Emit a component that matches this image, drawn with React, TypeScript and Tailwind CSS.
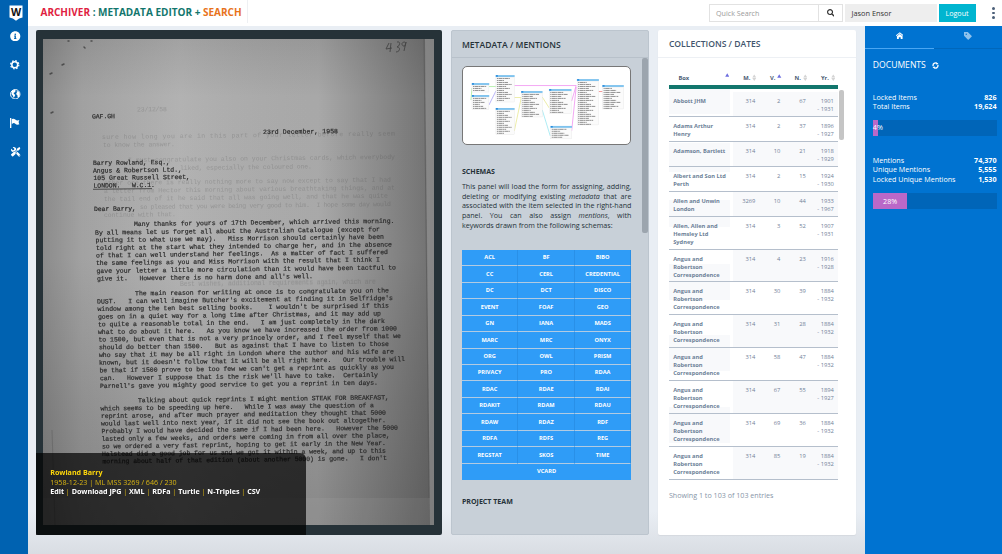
import React from "react";
import { FaInfoCircle, FaTools, FaSearch } from "react-icons/fa";
import { ImHome, ImPriceTag } from "react-icons/im";

type Line = [number, number, number, string];

const letter: Line[] = [
  [92, 118.5, 115, "GAF.GH"],
  [263, 134, 338, "23rd December, 1958"],
  [93, 165, 170, "Barry Rowland, Esq.,"],
  [93, 172.7, 182, "Angus & Robertson Ltd.,"],
  [93.5, 180, 190, "105 Great Russell Street,"],
  [93.5, 187.7, 155, "LONDON.   W.C.1."],
  [94, 211, 136, "Dear Barry,"],
  [134, 226, 394.5, "Many thanks for yours of 17th December, which arrived this morning."],
  [95, 234.7, 380, "By all means let us forget all about the Australian Catalogue (except for"],
  [95.5, 242.2, 384, "putting it to what use we may).   Miss Morrison should certainly have been"],
  [96, 250, 392, "told right at the start what they intended to charge her, and in the absence"],
  [96, 257.5, 388, "of that I can well understand her feelings.  As a matter of fact I suffered"],
  [96, 265, 380, "the same feelings as you and Miss Morrison with the result that I think I"],
  [96.5, 273, 396, "gave your letter a little more circulation than it would have been tactful to"],
  [97, 280.7, 313, "give it.   However there is no harm done and all's well."],
  [135, 295.4, 389, "The main reason for writing at once is to congratulate you on the"],
  [97, 303.5, 393, "DUST.   I can well imagine Butcher's excitement at finding it in Selfridge's"],
  [97.5, 311, 389, "window among the ten best selling books.    I wouldn't be surprised if this"],
  [98, 318.7, 381, "goes on in a quiet way for a long time after Christmas, and it may add up"],
  [98, 326.4, 385, "to quite a reasonable total in the end.   I am just completely in the dark"],
  [98, 334, 397, "what to do about it here.   As you know we have increased the order from 1000"],
  [98.5, 341.6, 401, "to 1500, but even that is not a very princely order, and I feel myself that we"],
  [99, 349.3, 389, "should do better than 1500.   But as against that I have to listen to those"],
  [99, 357, 394, "who say that it may be all right in London where the author and his wife are"],
  [99, 364.7, 405, "known, but it doesn't follow that it will be all right here.   Our trouble will"],
  [99.5, 372.4, 394, "be that if 1500 prove to be too few we can't get a reprint as quickly as you"],
  [100, 380.2, 378, "can.   However I suppose that is the risk we'll have to take.  Certainly"],
  [100, 388, 378, "Parnell's gave you mighty good service to get you a reprint in ten days."],
  [138, 402.4, 389, "Talking about quick reprints I might mention STEAK FOR BREAKFAST,"],
  [100.5, 410.5, 374, "which seems to be speeding up here.   While I was away the question of a"],
  [101, 418, 386, "reprint arose, and after much prayer and meditation they thought that 5000"],
  [101, 425.5, 386, "would last well into next year, if it did not see the book out altogether."],
  [101.5, 433.2, 398, "Probably I would have decided the same if I had been here.   However the 5000"],
  [101.5, 440.8, 390, "lasted only a few weeks, and orders were coming in from all over the place,"],
  [102, 448.4, 386, "so we ordered a very fast reprint, hoping to get it early in the New Year."],
  [102, 456, 386, "Halstead did a good job for us and we got it within a week, and up to this"],
  [102.5, 463.4, 387, "morning about half of that edition (about another 5000) is gone.   I don't"],
];

const ghosts: Line[] = [
  [137, 111.5, 167, "23/12/58"],
  [102, 139, 395, "sure how long you are in this part of your letter before really seem"],
  [103, 147, 175, "to know the answer."],
  [128, 162, 395, "I must congratulate you also on your Christmas cards, which everybody"],
  [180, 170, 312, "liked, especially the coloured one."],
  [104, 185, 391, "other one there is really nothing more to say now except to say that I had"],
  [104, 193, 395, "a letter from Hector this morning about various breathtaking things, and at"],
  [104, 201, 388, "the tail end of it he said that all was going well, and that he was quite"],
  [140, 209, 391, "so pleased that you were being very good to him.  I hope some day would"],
  [104, 217, 176, "continue with that."],
  [180, 286, 376, "Best wishes, additional requirements again, which are"],
];

function LetterLine({ line }: { line: Line }) {
  const [x, y, end, text] = line;
  return (
    <text x={x} y={y} textLength={end - x} transform={`rotate(-0.68 ${x} ${y})`} className="whitespace-pre">
      {text}
    </text>
  );
}

function Letter() {
  return (
    <svg viewBox="43 39 391 486" className="block h-[486px] w-[391px]" fontFamily='"Liberation Mono", monospace' fontSize="6.5">
      <defs>
        <linearGradient id="paper" x1="0" y1="0" x2="0" y2="1">
          <stop offset="0" stopColor="#9c9c9c" />
          <stop offset="0.12" stopColor="#adadad" />
          <stop offset="0.45" stopColor="#aeaeae" />
          <stop offset="0.75" stopColor="#9a9a9a" />
          <stop offset="1" stopColor="#8c8c8c" />
        </linearGradient>
        <linearGradient id="sides" x1="0" y1="0" x2="1" y2="0">
          <stop offset="0" stopColor="#000" stopOpacity="0.2" />
          <stop offset="0.1" stopColor="#000" stopOpacity="0.07" />
          <stop offset="0.35" stopColor="#fff" stopOpacity="0.06" />
          <stop offset="0.7" stopColor="#000" stopOpacity="0.03" />
          <stop offset="1" stopColor="#000" stopOpacity="0.36" />
        </linearGradient>
        <filter id="soft"><feGaussianBlur stdDeviation="0.7" /></filter>
        <filter id="ink"><feGaussianBlur stdDeviation="0.35" /></filter>
      </defs>
      <rect x="43" y="38" width="393" height="488" fill="url(#paper)" />
      <rect x="43" y="38" width="393" height="488" fill="url(#sides)" />
      <path d="M43 498H430V525H43Z" fill="#fff" opacity=".05" />
      <path d="M424 39L429 498" stroke="#555" strokeWidth="1" opacity=".6" />
      <path d="M425 39L430 525H435V39Z" fill="#999" opacity=".55" />
      <path d="M52 430L55 525" stroke="#555" strokeWidth="1" opacity=".4" />
      <g fill="#333" opacity=".2" filter="url(#soft)">
        {ghosts.map((l, i) => <LetterLine key={i} line={l} />)}
      </g>
      <g fill="#2b2b2b" stroke="#2b2b2b" strokeWidth=".2" filter="url(#ink)">
        {letter.map((l, i) => <LetterLine key={i} line={l} />)}
      </g>
      <path d="M93 189.3L152 188.6" stroke="#333" strokeWidth=".8" />
      <path d="M389 43l-3 6 6-1M391 43l-1 9M397 42c4-1 3 4 0 5 4 0 3 5-1 5M405 42c-5 0-3 5 0 4l1-4-2 9" fill="none" stroke="#444" strokeWidth=".9" />
      <path d="M68 41l1 0M84 47l1 1M91 41l1 0M62 65l2-1M50 74l2-1M51 113l2-1" stroke="#333" strokeWidth="1.5" strokeLinecap="round" opacity=".7" />
    </svg>
  );
}

const tables: [number, number, number, number][] = [
  [9, 18, 17, 7], [9, 30, 17, 12.5], [33, 10, 18.5, 25], [33, 43, 18.5, 24.5], [58.5, 26, 21, 24],
  [86.5, 24, 22, 22.5], [88, 61, 21, 11], [114.500, 14, 21.500, 44], [140, 20, 21, 22],
];

function SchemaDiagram() {
  return (
    <svg viewBox="0 0 168 77" className="block h-full w-full">
      <g fill="none" strokeWidth=".7">
        <path d="M9 21L8 33M26 19.500h7" stroke="#9beb8f" />
        <path d="M26 38L33 24" stroke="#9c94f5" />
        <path d="M51.500 18.500H113.500L109 34M109 64L113.500 20" stroke="#ee82ee" />
        <path d="M51.500 30.500h7L51.500 64M79.500 30l7 11" stroke="#e5e585" />
        <path d="M79.500 43l8 26" stroke="#8ce4ef" />
        <path d="M136 24.500h4" stroke="#f06b6b" />
      </g>
      {tables.map(([x, y, w, h]) => (
        <g key={`${x}-${y}`}>
          <rect x={x} y={y} width={w} height={h} fill="#fbfbfb" stroke="#ddd" strokeWidth=".3" />
          <rect x={x - 0.3} y={y - 2} width={w + 0.6} height="1.900" fill="#7fc3ee" />
          <rect x={x} y={y - 1.9} width="2" height="1.500" fill="#2689dc" />
          {Array.from({ length: Math.floor(h / 2) }, (_, i) => (
            <path key={i} d={`M${x + 1} ${y + 1.4 + i * 2}h${w * (0.4 + ((i * 7 + Math.round(x)) % 5) * 0.1)}`} stroke="#777" strokeWidth=".8" strokeDasharray="1.2 .4 4 .3" />
          ))}
        </g>
      ))}
    </svg>
  );
}

const schemas = "ACL BF BIBO CC CERL CREDENTIAL DC DCT DISCO EVENT FOAF GEO GN IANA MADS MARC MRC ONYX ORG OWL PRISM PRIVACY PRO RDAA RDAC RDAE RDAI RDAKIT RDAM RDAU RDAW RDAZ RDF RDFA RDFS REG REGSTAT SKOS TIME".split(" ");

const arc = ["Angus and", "Robertson", "Correspondence"];
const rows: [string[], string, string, string, string, string][] = [
  [["Abbott JHM"], "314", "2", "67", "1901", "1931"],
  [["Adams Arthur", "Henry"], "314", "2", "37", "1896", "1927"],
  [["Adamson, Bartlett"], "314", "10", "21", "1918", "1929"],
  [["Albert and Son Ltd", "Perth"], "314", "2", "15", "1924", "1930"],
  [["Allen and Unwin", "London"], "3269", "10", "44", "1933", "1967"],
  [["Allen, Allen and", "Hemsley Ltd", "Sydney"], "314", "3", "52", "1907", "1931"],
  [arc, "314", "4", "23", "1916", "1928"],
  [arc, "314", "30", "39", "1884", "1932"],
  [arc, "314", "31", "28", "1884", "1932"],
  [arc, "314", "58", "47", "1884", "1932"],
  [arc, "314", "67", "55", "1894", "1927"],
  [arc, "314", "69", "36", "1884", "1932"],
  [arc, "314", "85", "19", "1884", "1932"],
];

function SortMark({ active = false }: { active?: boolean }) {
  return (
    <svg viewBox="0 0 5 8" className="h-[7.500px] w-[4.500px] shrink-0">
      {active ? <path d="M.2 4L2.500 0 4.800 4Z" fill="#6d6ee0" /> : <path d="M.3 3.600L2.500 .4 4.700 3.600ZM.3 4.400L2.500 7.600 4.700 4.400Z" fill="#d4d4d4" />}
    </svg>
  );
}

function CollectionsTable() {
  return (
    <div className="w-[169px] text-[5.800px] leading-[8px] text-[#718198]">
      <div className="flex h-[26.500px] items-center pt-[14px] pb-[2px] font-bold text-[#4a5b73]">
        <span className="w-[50px] pl-[9.500px]">Box</span>
        <span className="flex w-[16px] pb-[2px] pl-[6px]"><SortMark active /></span>
        <span className="flex w-[22px] items-center justify-end gap-[2px]">M.<SortMark /></span>
        <span className="flex w-[25px] items-center justify-end gap-[2px]">V.<SortMark active /></span>
        <span className="flex w-[25.500px] items-center justify-end gap-[2px]">N.<SortMark /></span>
        <span className="flex w-[28px] items-center justify-end gap-[2px]">Yr.<SortMark /></span>
      </div>
      <div className="h-[4.500px] bg-[#12766d]" />
      <div className="bg-[linear-gradient(to_bottom,#f8f9fb_25px,#fff_25px,#fff_54.500px,#f8f9fb_54.500px,#f8f9fb_83px,#fff_83px,#fff_111px,#f8f9fb_111px,#f8f9fb_138.500px,#fff_138.500px,#fff_175px,#f8f9fb_175px,#f8f9fb_211px,#fff_211px,#fff_246.500px,#f8f9fb_246.500px,#f8f9fb_282px,#fff_282px,#fff_318px,#f8f9fb_318px,#f8f9fb_354px,#fff_354px)] bg-[length:61px_100%] bg-no-repeat pt-[2.200px]">
        {rows.map(([name, m, v, n, from, to], i) => (
          <div key={i} className={"flex border-b-[1.500px] border-[#b5bfcc] " + (name.length === 3 ? "h-[32.950px]" : "h-[25px]")}>
            <div className="w-[64px] pt-[5px] pl-[4.300px] text-[5.700px] font-bold text-[#6c7f97]">
              {name.map((s) => <div key={s} className="whitespace-nowrap">{s}</div>)}
            </div>
            <div className={"flex flex-1 pt-[5px] text-right " + (i % 2 ? "bg-white" : "bg-[#f8f9fb]")}>
              <span className="w-[22.500px]">{m}</span>
              <span className="w-[25px]">{v}</span>
              <span className="w-[25.500px]">{n}</span>
              <span className="w-[28px]">{from}<br />- {to}</span>
            </div>
          </div>
        ))}
      </div>
      <div className="mt-[9.500px] text-[7.150px] leading-[10px] text-[#8795a8]">Showing 1 to 103 of 103 entries</div>
    </div>
  );
}

function Stat({ label, value }: { label: string; value: string }) {
  return (
    <div className="flex h-[9.750px] justify-between text-[7.150px] leading-[9.750px]">
      <span>{label}</span>
      <b>{value}</b>
    </div>
  );
}

export default function App() {
  return (
    <div className="flex h-[554px] w-[1002px] overflow-hidden font-['Open_Sans',sans-serif]">
      <nav className="flex w-[28px] shrink-0 flex-col items-center bg-[#0062b1] pl-[3px] text-white">
        <div className="flex h-[26px] items-center">
          <svg viewBox="0 0 14 16" className="h-[16px] w-[14px]">
            <path d="M.5 .5H13.500V12.500Q10 13 7 15.700Q4 13 .5 12.500Z" fill="#fff" />
            <text x="7" y="10.800" textAnchor="middle" fontSize="10.5" fontWeight="700" fill="#111">W</text>
          </svg>
        </div>
        <div className="flex h-[20px] items-center"><FaInfoCircle size={10.5} /></div>
        <div className="mt-[9px] flex h-[20px] items-center">
          <svg viewBox="0 0 20 20" className="mr-[1px] h-[9.500px] w-[9.500px]" fill="none" stroke="#fff">
            <circle cx="10" cy="10" r="6.2" strokeWidth="3.200" />
            <circle cx="10" cy="10" r="8.600" strokeWidth="2.600" strokeDasharray="3.377 3.377" />
          </svg>
        </div>
        <div className="mt-[9px] flex h-[20px] items-center">
          <svg viewBox="0 0 20 20" className="h-[10.500px] w-[10.500px]">
            <circle cx="10" cy="10" r="9" fill="none" stroke="#fff" strokeWidth="1.800" />
            <path d="M3 4L8 1.500 11 3 9.500 6 7 7 7.500 9.500 10 11 9 14 7 17 5.500 13 3 10ZM13 4L17 5 18.500 10 17 15 14.500 16 14 12 11.500 9.500 13 7Z" fill="#fff" />
          </svg>
        </div>
        <div className="mt-[9px] flex h-[20px] items-center">
          <svg viewBox="0 0 18 20" className="mr-[1px] h-[10.500px] w-[9.500px]" fill="#fff">
            <path d="M0 0H2.500V20H0ZM3.500 2Q7 0 10 3T18 4Q15 8 18 12Q13 14 10 11T3.500 12Z" />
          </svg>
        </div>
        <div className="mt-[9px] flex h-[20px] items-center"><FaTools size={9.5} className="-scale-x-100" /></div>
      </nav>
      <div className="flex min-w-0 flex-1 flex-col">
        <header className="flex h-[26px] shrink-0 items-center bg-white pl-[12.500px]">
          <h1 className="w-[206px] pb-[1px] text-[10px] font-bold whitespace-nowrap text-[#12766d]">
            <span className="text-[#e01e42]">ARCHIVER</span> : METADATA EDITOR + <span className="text-[#e8731c]">SEARCH</span>
          </h1>
          <div className="h-[23px] w-px self-start bg-[#eef0f3]" />
          <div className="flex-1" />
          <div className="flex h-[18px] w-[134px] border border-[#e2e2e2] text-[7.150px] text-[#9a9a9a]">
            <span className="flex w-[109px] items-center border-r border-[#e2e2e2] pl-[6px]">Quick Search</span>
            <span className="flex flex-1 items-center justify-center text-[#333]"><FaSearch size={7.5} /></span>
          </div>
          <div className="ml-[2px] flex h-[18px] w-[92px] items-center bg-[#eeeeee] pt-[1px] pl-[6.500px] text-[7.350px] text-[#333]">Jason Ensor</div>
          <div className="ml-[1.500px] flex h-[18px] w-[37px] items-center justify-center bg-[#00b5d0] pt-[1px] text-[7.150px] text-white">Logout</div>
          <div className="mr-[7px] ml-[16.500px] flex w-[3px] flex-col gap-[2px]">
            <i className="size-[2.500px] rounded-full bg-[#4b5f78]" />
            <i className="size-[2.500px] rounded-full bg-[#4b5f78]" />
            <i className="size-[2.500px] rounded-full bg-[#4b5f78]" />
          </div>
        </header>
        <div className="flex min-h-0 flex-1">
          <main className="flex flex-1 items-start bg-[linear-gradient(to_bottom,#e9eef4_92%,#d9dde3)] pt-[4.400px] pl-[8.400px]">
            <section className="relative h-[505px] w-[406px] rounded-[2px] bg-[#263238] pt-[8.500px] pl-[7px]">
              <Letter />
              <div className="absolute bottom-0 left-0 h-[82px] w-[269.500px] rounded-tr-[6px] bg-black/70 pt-[14.600px] pl-[13.800px] text-[7.150px] leading-[9.750px] text-[#d6b312]">
                <div className="font-bold text-[#fdd60a]">Rowland Barry</div>
                <div>1958-12-23 | ML MSS 3269 / 646 / 230</div>
                <div>
                  <b className="text-white">Edit</b> | <b className="text-white">Download JPG</b> | <b className="text-white">XML</b> | <b className="text-white">RDFa</b> | <b className="text-white">Turtle</b> | <b className="text-white">N-Triples</b> | <b className="text-white">CSV</b>
                </div>
              </div>
            </section>
            <section className="ml-[8.500px] flex h-[505px] w-[198px] flex-col rounded-[2px] border border-[#bcc5ce] bg-[#c8d0d8] text-[#263238]">
              <h2 className="flex h-[27px] shrink-0 items-center border-b border-[#b8c1ca] pt-[2px] pl-[10px] text-[8.600px] font-semibold">METADATA / MENTIONS</h2>
              <div className="flex flex-1 justify-between pl-[10px]">
                <div className="w-[169.500px] pt-[7.500px]">
                  <div className="h-[79px] rounded-[5px] border border-[#777] bg-white"><SchemaDiagram /></div>
                  <h3 className="mt-[21.500px] text-[7.050px] leading-[10px] font-bold">SCHEMAS</h3>
                  <p className="mt-[5.500px] text-justify text-[7.150px] leading-[9.800px]">
                    This panel will load the form for assigning, adding, deleting or modifying existing <i>metadata</i> that are associated with the item selected in the right-hand panel. You can also assign <i>mentions</i>, with keywords{"\u00a0"}drawn from the following schemas:
                  </p>
                  <div className="mt-[19px] grid grid-cols-3 text-center text-[5.650px] font-bold text-white">
                    {schemas.map((s) => (
                      <div key={s} className="flex h-[16.450px] items-center justify-center border-r border-b-[1.500px] border-r-[#2990e8] border-b-[#b2cbe2] bg-[#2f9cf7]">{s}</div>
                    ))}
                    <div className="col-span-3 flex h-[16px] items-center justify-center bg-[#2f9cf7]">VCARD</div>
                  </div>
                  <h3 className="mt-[16.500px] text-[7.050px] leading-[10px] font-bold">PROJECT TEAM</h3>
                </div>
                <div className="h-[175px] w-[6px] rounded-[2px] bg-[#9ca5ae]" />
              </div>
            </section>
            <section className="ml-[9px] h-[504.500px] w-[198px] rounded-[2px] bg-white shadow-[0_1px_1px_#d5d9df]">
              <h2 className="flex h-[28px] items-center border-b border-[#edf0f4] pt-[2px] pl-[11px] text-[8.600px] font-semibold text-[#42556d]">COLLECTIONS / DATES</h2>
              <div className="flex pl-[11px]">
                <CollectionsTable />
                <div className="mt-[31.500px] ml-[1px] h-[50px] w-[5.500px] rounded-[2px] bg-[#c5c5c5]" />
              </div>
            </section>
          </main>
          <aside className="w-[137px] shrink-0 bg-[#0073d1] text-white">
            <div className="flex h-[23px] border-b border-[#0067bb]">
              <div className="-mb-px flex w-[69px] items-center justify-center border-b-[1.500px] border-[#4aa6f2] pb-[3px]"><ImHome size={7.5} /></div>
              <div className="flex flex-1 items-center justify-center pb-[3px] text-[#8fc2ec]"><ImPriceTag size={8} className="-scale-x-100" /></div>
            </div>
            <div className="pr-[5.500px] pl-[7.800px]">
              <div className="mt-[11px] flex h-[10px] items-center gap-[6px] text-[8.600px]">
                DOCUMENTS
                <svg viewBox="0 0 12 12" className="h-[7px] w-[7px]" fill="none" stroke="#fff" strokeWidth="2.200">
                  <path d="M2 7A4 4 0 0 1 8.500 2.800M10 5A4 4 0 0 1 3.500 9.200" />
                  <path d="M7 .5L11 2.500 8 5ZM5 11.500L1 9.500 4 7Z" fill="#fff" stroke="none" />
                </svg>
              </div>
              <div className="mt-[22.600px]">
                <Stat label="Locked Items" value="826" />
                <Stat label="Total Items" value="19,624" />
              </div>
              <div className="mt-[7.500px] flex h-[16px] bg-[#0065b8]">
                <div className="flex w-[5px] items-center bg-[#ba68c8] text-[7.150px]">4%</div>
              </div>
              <div className="mt-[20px]">
                <Stat label="Mentions" value="74,370" />
                <Stat label="Unique Mentions" value="5,555" />
                <Stat label="Locked Unique Mentions" value="1,530" />
              </div>
              <div className="mt-[8.500px] flex h-[16px] bg-[#0065b8]">
                <div className="flex w-[34.700px] items-center justify-center bg-[#ba68c8] text-[7.150px]">28%</div>
              </div>
            </div>
          </aside>
        </div>
      </div>
    </div>
  );
}
